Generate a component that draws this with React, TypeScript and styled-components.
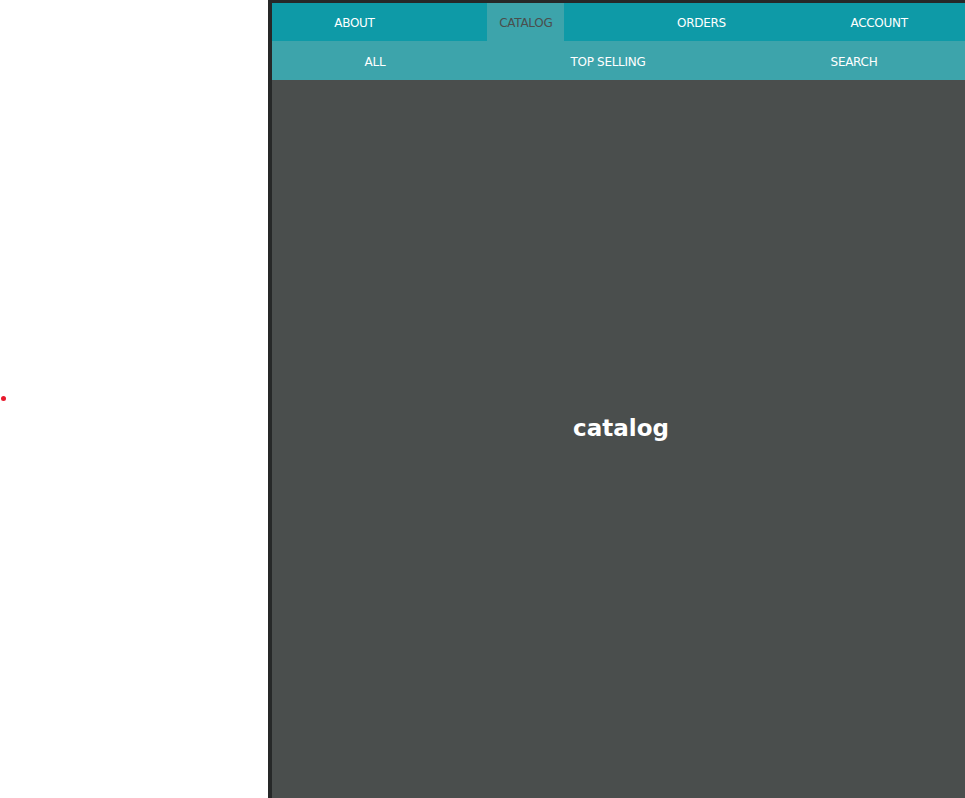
import React from "react";
import styled, { createGlobalStyle } from "styled-components";

const GlobalStyle = createGlobalStyle`
  html, body {
    margin: 0;
    padding: 0;
    overflow: hidden;
    background: #ffffff;
    font-family: "DejaVu Sans", Verdana, sans-serif;
  }
`;

const Page = styled.div`
  display: flex;
  flex-direction: row;
  height: 798px;
  width: 970px;
`;

const Side = styled.div`
  width: 268px;
  flex-shrink: 0;
  display: flex;
  align-items: center;
  padding-left: 1px;
  box-sizing: border-box;
`;

const Dot = styled.span`
  width: 5px;
  height: 5px;
  border-radius: 50%;
  background: #e8192c;
  margin-top: -2px;
`;

const Frame = styled.div`
  flex: 1;
  display: flex;
  flex-direction: column;
  border-left: 4px solid #262828;
  border-top: 3px solid #262828;
  background: #4a4e4d;
`;

const TopNav = styled.nav`
  display: flex;
  justify-content: space-around;
  align-items: stretch;
  height: 38px;
  background: #0e9aa7;
`;

const SubNav = styled.nav`
  display: flex;
  justify-content: space-around;
  align-items: stretch;
  height: 39px;
  background: #3da4ab;
`;

const Tab = styled.a<{ $active?: boolean }>`
  display: flex;
  align-items: center;
  padding: 2px 12px 0;
  font-size: 12px;
  letter-spacing: -0.3px;
  text-transform: uppercase;
  text-decoration: none;
  cursor: pointer;
  color: ${(p) => (p.$active ? "#4a4e4d" : "#ffffff")};
  background: ${(p) => (p.$active ? "#3da4ab" : "transparent")};
`;

const Content = styled.main`
  flex: 1;
  display: flex;
  align-items: center;
  justify-content: center;
  padding-bottom: 22px;
`;

const Heading = styled.h1`
  margin: 0;
  color: #ffffff;
  font-size: 23px;
  font-weight: bold;
`;

const mainTabs = ["About", "Catalog", "Orders", "Account"];
const subTabs = ["All", "Top selling", "Search"];

export default function App() {
  const active = "Catalog";

  return (
    <>
      <GlobalStyle />
      <Page>
        <Side>
          <Dot />
        </Side>
        <Frame>
          <TopNav>
            {mainTabs.map((t) => (
              <Tab key={t} $active={t === active}>
                {t}
              </Tab>
            ))}
          </TopNav>
          <SubNav>
            {subTabs.map((t) => (
              <Tab key={t}>{t}</Tab>
            ))}
          </SubNav>
          <Content>
            <Heading>{active.toLowerCase()}</Heading>
          </Content>
        </Frame>
      </Page>
    </>
  );
}
